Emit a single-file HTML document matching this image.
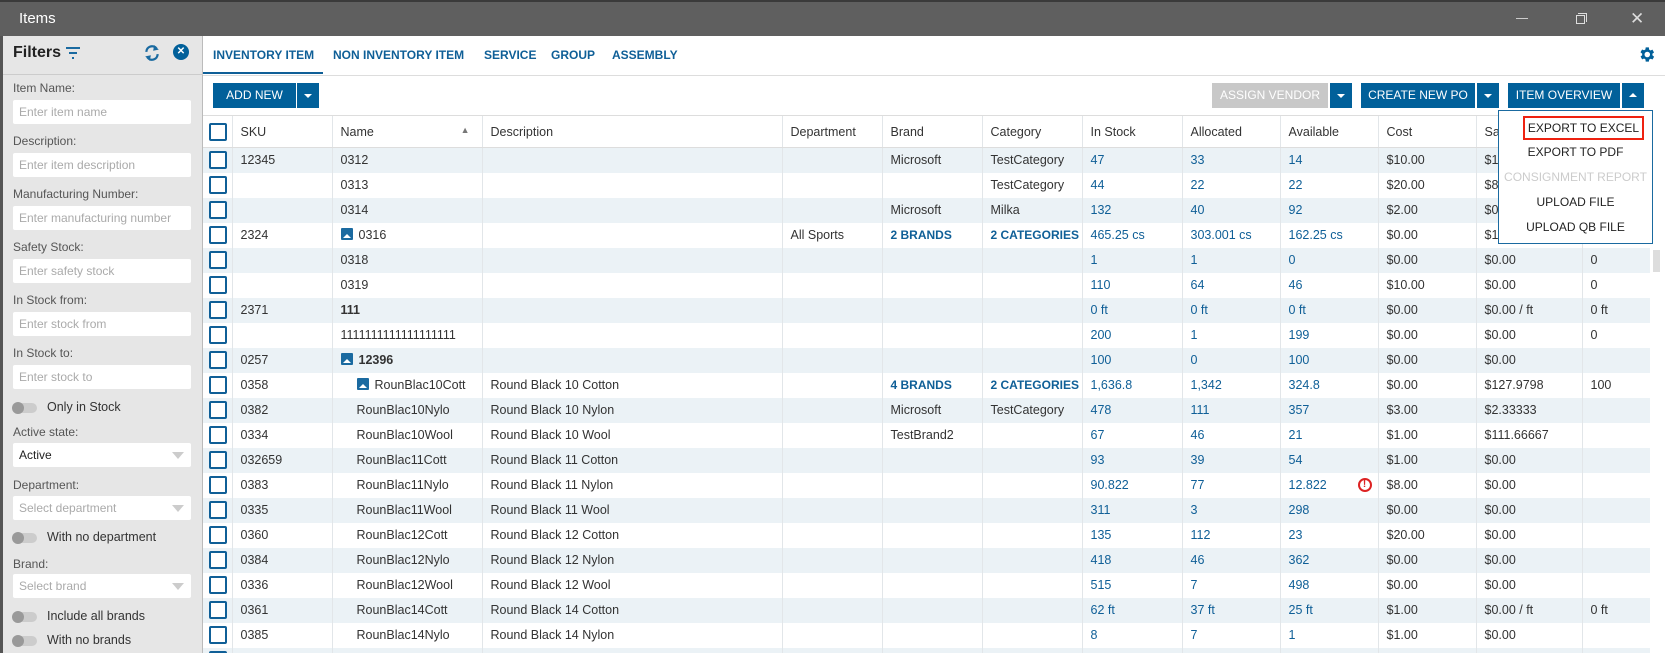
<!DOCTYPE html>
<html><head><meta charset="utf-8"><style>
*{box-sizing:border-box;margin:0;padding:0}
html,body{width:1665px;height:653px;overflow:hidden}
body{font-family:"Liberation Sans",sans-serif;font-size:12.5px;color:#333;background:#fff;position:relative}
#wrap{position:absolute;left:0;top:0;width:1665px;height:653px;overflow:hidden}
.abs{position:absolute}
.title{left:0;top:0;width:1665px;height:36px;background:#5f5f5f;border-top:2px solid #3a3a3a;color:#fff;font-size:15px;line-height:34px;padding-left:19px}
.side{left:0;top:36px;width:203px;height:617px;background:#e6e6e6;border-left:3px solid #555;border-right:1px solid #bbb}
.lbl{position:absolute;left:13px;font-size:12px;color:#555}
.inp{position:absolute;left:13px;width:178px;height:24px;background:#fff;border-radius:2px;font-size:12px;color:#aaa;line-height:24px;padding-left:6px}
.inp .ar{position:absolute;right:7px;top:9px;width:0;height:0;border-left:6px solid transparent;border-right:6px solid transparent;border-top:7px solid #ccc}
.tg{position:absolute;left:13px;width:24px;height:10px;border-radius:5px;background:#ccc}
.tg:before{content:"";position:absolute;left:-1px;top:-1px;width:12px;height:12px;border-radius:6px;background:#999}
.tgl{position:absolute;left:47px;font-size:12.5px;color:#333}
.tab{position:absolute;top:48px;font-weight:bold;font-size:12px;color:#0f5f97}
.btn{position:absolute;top:83px;height:25px;background:#01609a;color:#fff;font-size:12px;line-height:25px;text-align:center}
.dd{position:absolute;top:83px;height:25px;width:22px;background:#01609a}
.dd:after{content:"";position:absolute;left:7px;top:11px;border-left:4px solid transparent;border-right:4px solid transparent;border-top:4px solid #fff}
.dd.up:after{border-top:none;border-bottom:4px solid #fff;top:10px}
.tbl{position:absolute;left:203px;top:115px;width:1447px;height:538px;overflow:hidden}
table{border-collapse:collapse;table-layout:fixed;width:1447px}
td,th{height:25px;padding:0 0 0 8px;white-space:nowrap;overflow:hidden;border-left:1px solid #e2e6e9;text-align:left;font-weight:normal}
th{height:32px;border-bottom:1px solid #ddd;border-top:1px solid #ddd}
tr:nth-child(even) td{background:#ebf2f6}
td:first-child,th:first-child{border-left:none;padding-left:6px}
.cb{display:inline-block;width:18px;height:18px;border:2px solid #0f5f97;border-radius:2px;background:#fff;vertical-align:middle}
.b{color:#0f5f97}
.bb{color:#0f5f97;font-weight:bold;font-size:12px}
.img{display:inline-block;width:12px;height:12px;background:#1a6aa0;border-radius:1px;vertical-align:-1px;margin-right:6px;position:relative}
.img:after{content:"";position:absolute;left:2px;bottom:2px;border-left:4px solid transparent;border-right:4px solid transparent;border-bottom:4px solid #fff}
.menu{left:1498px;top:110px;width:155px;height:134px;background:#fff;border:1px solid #1a6aa0;font-size:12px;color:#222;text-align:center}
.menu div{height:25px;line-height:25px}
</style></head><body><div id="wrap">
<div class="abs title">Items
<span class="abs" style="left:1516px;top:16px;width:12px;height:1px;background:#ccc"></span>
<span class="abs" style="left:1576px;top:13px;width:9px;height:9px;border:1px solid #ddd"></span>
<span class="abs" style="left:1578px;top:11px;width:9px;height:9px;border-top:1px solid #ddd;border-right:1px solid #ddd"></span>
<span class="abs" style="left:1630px;top:0;font-size:17px;color:#ddd">✕</span>
</div>
<div class="abs side">
<div class="abs" style="left:10px;top:8px;font-weight:bold;font-size:16px;color:#222">Filters</div>
<svg class="abs" style="left:62px;top:11px" width="16" height="12"><path d="M1 1h14M4 6h8M7 11h2" stroke="#1a6aa0" stroke-width="2"/></svg>
<svg class="abs" style="left:140px;top:8px" width="18" height="18" viewBox="0 0 16 16"><path d="M3 7a5 5 0 0 1 9-3M13 9a5 5 0 0 1-9 3" stroke="#1a6aa0" stroke-width="2" fill="none"/><path d="M10 1l4 4-5 1z M6 15l-4-4 5-1z" fill="#1a6aa0"/></svg>
<div class="abs" style="left:170px;top:8px;width:16px;height:16px;border-radius:8px;background:#01609a;color:#fff;font-size:10px;text-align:center;line-height:16px;font-weight:bold">✕</div>
<div class="abs" style="left:0;top:38px;width:200px;height:1px;background:#ccc"></div>
</div>
<div class="lbl" style="top:81px">Item Name:</div><div class="inp" style="top:100px">Enter item name</div>
<div class="lbl" style="top:134px">Description:</div><div class="inp" style="top:153px">Enter item description</div>
<div class="lbl" style="top:187px">Manufacturing Number:</div><div class="inp" style="top:206px">Enter manufacturing number</div>
<div class="lbl" style="top:240px">Safety Stock:</div><div class="inp" style="top:259px">Enter safety stock</div>
<div class="lbl" style="top:293px">In Stock from:</div><div class="inp" style="top:312px">Enter stock from</div>
<div class="lbl" style="top:346px">In Stock to:</div><div class="inp" style="top:365px">Enter stock to</div>
<div class="tg" style="top:403px"></div><div class="tgl" style="top:400px">Only in Stock</div>
<div class="lbl" style="top:425px">Active state:</div><div class="inp" style="top:443px;color:#222">Active<span class="ar"></span></div>
<div class="lbl" style="top:478px">Department:</div><div class="inp" style="top:496px">Select department<span class="ar"></span></div>
<div class="tg" style="top:533px"></div><div class="tgl" style="top:530px">With no department</div>
<div class="lbl" style="top:557px">Brand:</div><div class="inp" style="top:574px">Select brand<span class="ar"></span></div>
<div class="tg" style="top:612px"></div><div class="tgl" style="top:609px">Include all brands</div>
<div class="tg" style="top:636px"></div><div class="tgl" style="top:633px">With no brands</div>

<div class="tab" style="left:213px">INVENTORY ITEM</div>
<div class="abs" style="left:203px;top:72px;width:120px;height:2px;background:#0f5f97"></div>
<div class="tab" style="left:333px">NON INVENTORY ITEM</div>
<div class="tab" style="left:484px">SERVICE</div>
<div class="tab" style="left:551px">GROUP</div>
<div class="tab" style="left:612px">ASSEMBLY</div>
<div class="abs" style="left:203px;top:75px;width:1462px;height:1px;background:#ddd"></div>
<svg class="abs" style="left:1637px;top:45px" width="19" height="19" viewBox="0 0 24 24"><path fill="#01609a" d="M19.4 13a7.5 7.5 0 0 0 0-2l2.1-1.6-2-3.5-2.5 1a7 7 0 0 0-1.7-1L15 3h-4l-.4 2.7a7 7 0 0 0-1.7 1l-2.5-1-2 3.5L6.6 11a7.5 7.5 0 0 0 0 2l-2.1 1.6 2 3.5 2.5-1a7 7 0 0 0 1.7 1L11 21h4l.4-2.7a7 7 0 0 0 1.7-1l2.5 1 2-3.5zM13 15.5a3.5 3.5 0 1 1 0-7 3.5 3.5 0 0 1 0 7z"/></svg>

<div class="btn" style="left:213px;width:83px">ADD NEW</div><div class="dd" style="left:297px"></div>
<div class="btn" style="left:1212px;width:116px;background:#c8c8c8">ASSIGN VENDOR</div><div class="dd" style="left:1330px"></div>
<div class="btn" style="left:1361px;width:114px">CREATE NEW PO</div><div class="dd" style="left:1477px"></div>
<div class="btn" style="left:1508px;width:112px">ITEM OVERVIEW</div><div class="dd up" style="left:1622px"></div>

<div class="tbl"><table>
<colgroup><col style="width:29px"><col style="width:100px"><col style="width:150px"><col style="width:300px"><col style="width:100px"><col style="width:100px"><col style="width:100px"><col style="width:100px"><col style="width:98px"><col style="width:98px"><col style="width:98px"><col style="width:106px"><col style="width:68px"></colgroup>
<tr><th><span class="cb"></span></th><th>SKU</th><th>Name<span style="float:right;margin-right:12px;font-size:9px;color:#777">▲</span></th><th>Description</th><th>Department</th><th>Brand</th><th>Category</th><th>In Stock</th><th>Allocated</th><th>Available</th><th>Cost</th><th>Sale</th><th></th></tr>
<tr><td><span class="cb"></span></td><td>12345</td><td>0312</td><td></td><td></td><td>Microsoft</td><td>TestCategory</td><td class="b">47</td><td class="b">33</td><td class="b">14</td><td>$10.00</td><td>$1.00</td><td></td></tr>
<tr><td><span class="cb"></span></td><td></td><td>0313</td><td></td><td></td><td></td><td>TestCategory</td><td class="b">44</td><td class="b">22</td><td class="b">22</td><td>$20.00</td><td>$8.75</td><td></td></tr>
<tr><td><span class="cb"></span></td><td></td><td>0314</td><td></td><td></td><td>Microsoft</td><td>Milka</td><td class="b">132</td><td class="b">40</td><td class="b">92</td><td>$2.00</td><td>$0.00</td><td></td></tr>
<tr><td><span class="cb"></span></td><td>2324</td><td><span class="img"></span>0316</td><td></td><td>All Sports</td><td class="bb">2 BRANDS</td><td class="bb">2 CATEGORIES</td><td class="b">465.25 cs</td><td class="b">303.001 cs</td><td class="b">162.25 cs</td><td>$0.00</td><td>$13</td><td></td></tr>
<tr><td><span class="cb"></span></td><td></td><td>0318</td><td></td><td></td><td></td><td></td><td class="b">1</td><td class="b">1</td><td class="b">0</td><td>$0.00</td><td>$0.00</td><td>0</td></tr>
<tr><td><span class="cb"></span></td><td></td><td>0319</td><td></td><td></td><td></td><td></td><td class="b">110</td><td class="b">64</td><td class="b">46</td><td>$10.00</td><td>$0.00</td><td>0</td></tr>
<tr><td><span class="cb"></span></td><td>2371</td><td><b>111</b></td><td></td><td></td><td></td><td></td><td class="b">0 ft</td><td class="b">0 ft</td><td class="b">0 ft</td><td>$0.00</td><td>$0.00 / ft</td><td>0 ft</td></tr>
<tr><td><span class="cb"></span></td><td></td><td>1111111111111111111</td><td></td><td></td><td></td><td></td><td class="b">200</td><td class="b">1</td><td class="b">199</td><td>$0.00</td><td>$0.00</td><td>0</td></tr>
<tr><td><span class="cb"></span></td><td>0257</td><td><span class="img"></span><b>12396</b></td><td></td><td></td><td></td><td></td><td class="b">100</td><td class="b">0</td><td class="b">100</td><td>$0.00</td><td>$0.00</td><td></td></tr>
<tr><td><span class="cb"></span></td><td>0358</td><td style="padding-left:24px"><span class="img"></span>RounBlac10Cott</td><td>Round Black 10 Cotton</td><td></td><td class="bb">4 BRANDS</td><td class="bb">2 CATEGORIES</td><td class="b">1,636.8</td><td class="b">1,342</td><td class="b">324.8</td><td>$0.00</td><td>$127.9798</td><td>100</td></tr>
<tr><td><span class="cb"></span></td><td>0382</td><td style="padding-left:24px">RounBlac10Nylo</td><td>Round Black 10 Nylon</td><td></td><td>Microsoft</td><td>TestCategory</td><td class="b">478</td><td class="b">111</td><td class="b">357</td><td>$3.00</td><td>$2.33333</td><td></td></tr>
<tr><td><span class="cb"></span></td><td>0334</td><td style="padding-left:24px">RounBlac10Wool</td><td>Round Black 10 Wool</td><td></td><td>TestBrand2</td><td></td><td class="b">67</td><td class="b">46</td><td class="b">21</td><td>$1.00</td><td>$111.66667</td><td></td></tr>
<tr><td><span class="cb"></span></td><td>032659</td><td style="padding-left:24px">RounBlac11Cott</td><td>Round Black 11 Cotton</td><td></td><td></td><td></td><td class="b">93</td><td class="b">39</td><td class="b">54</td><td>$1.00</td><td>$0.00</td><td></td></tr>
<tr><td><span class="cb"></span></td><td>0383</td><td style="padding-left:24px">RounBlac11Nylo</td><td>Round Black 11 Nylon</td><td></td><td></td><td></td><td class="b">90.822</td><td class="b">77</td><td class="b">12.822<span style="float:right;margin-right:6px;width:14px;height:14px;border:2px solid #d22;border-radius:7px;color:#d22;font-size:10px;font-weight:bold;line-height:10px;text-align:center">!</span></td><td>$8.00</td><td>$0.00</td><td></td></tr>
<tr><td><span class="cb"></span></td><td>0335</td><td style="padding-left:24px">RounBlac11Wool</td><td>Round Black 11 Wool</td><td></td><td></td><td></td><td class="b">311</td><td class="b">3</td><td class="b">298</td><td>$0.00</td><td>$0.00</td><td></td></tr>
<tr><td><span class="cb"></span></td><td>0360</td><td style="padding-left:24px">RounBlac12Cott</td><td>Round Black 12 Cotton</td><td></td><td></td><td></td><td class="b">135</td><td class="b">112</td><td class="b">23</td><td>$20.00</td><td>$0.00</td><td></td></tr>
<tr><td><span class="cb"></span></td><td>0384</td><td style="padding-left:24px">RounBlac12Nylo</td><td>Round Black 12 Nylon</td><td></td><td></td><td></td><td class="b">418</td><td class="b">46</td><td class="b">362</td><td>$0.00</td><td>$0.00</td><td></td></tr>
<tr><td><span class="cb"></span></td><td>0336</td><td style="padding-left:24px">RounBlac12Wool</td><td>Round Black 12 Wool</td><td></td><td></td><td></td><td class="b">515</td><td class="b">7</td><td class="b">498</td><td>$0.00</td><td>$0.00</td><td></td></tr>
<tr><td><span class="cb"></span></td><td>0361</td><td style="padding-left:24px">RounBlac14Cott</td><td>Round Black 14 Cotton</td><td></td><td></td><td></td><td class="b">62 ft</td><td class="b">37 ft</td><td class="b">25 ft</td><td>$1.00</td><td>$0.00 / ft</td><td>0 ft</td></tr>
<tr><td><span class="cb"></span></td><td>0385</td><td style="padding-left:24px">RounBlac14Nylo</td><td>Round Black 14 Nylon</td><td></td><td></td><td></td><td class="b">8</td><td class="b">7</td><td class="b">1</td><td>$1.00</td><td>$0.00</td><td></td></tr>
<tr><td><span class="cb"></span></td><td></td><td></td><td></td><td></td><td></td><td></td><td></td><td></td><td></td><td></td><td></td><td></td></tr>
</table></div>
<div class="abs" style="left:1653px;top:250px;width:7px;height:22px;background:#ddd"></div>
<div class="abs menu">
<div style="margin:5px 8px 0 24px;height:24px;line-height:20px;border:2px solid #e21">EXPORT TO EXCEL</div>
<div>EXPORT TO PDF</div>
<div style="color:#ccc">CONSIGNMENT REPORT</div>
<div>UPLOAD FILE</div>
<div>UPLOAD QB FILE</div>
</div>
</div></body></html>
